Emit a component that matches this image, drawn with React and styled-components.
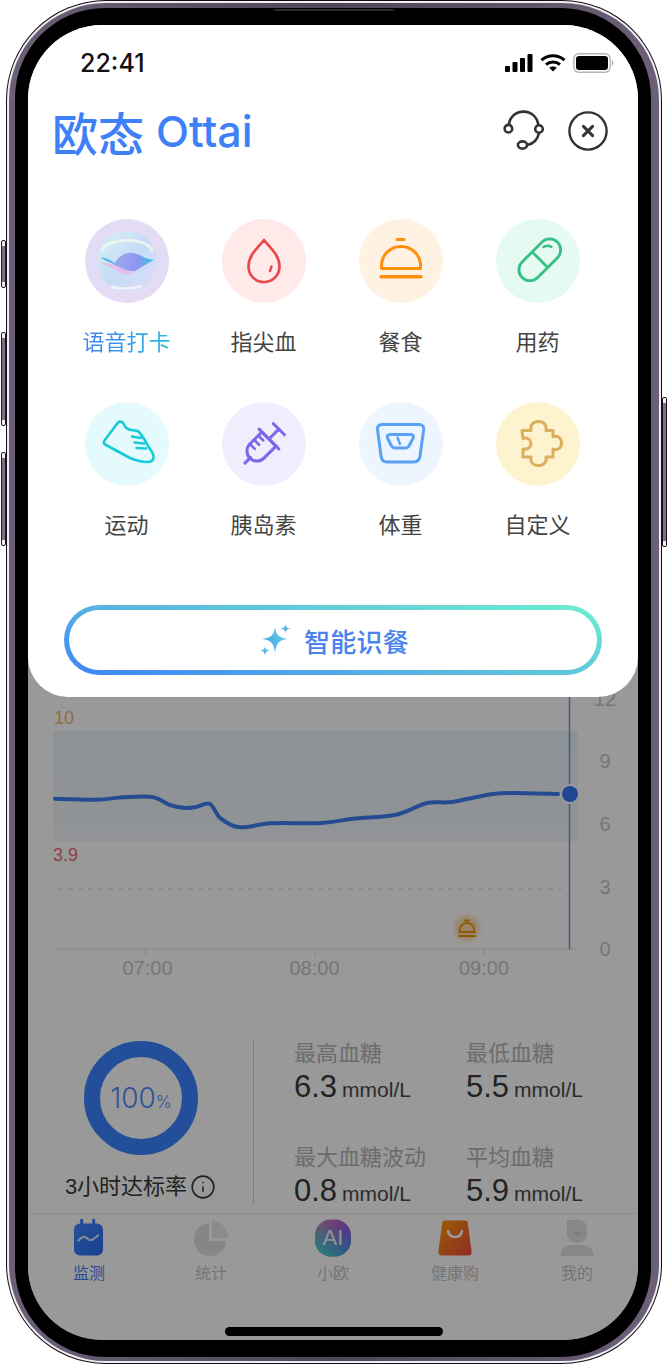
import React from 'react';
import styled, { createGlobalStyle } from 'styled-components';
import { Info } from 'lucide-react';

const SANS = '"Liberation Sans", "Noto Sans CJK SC", sans-serif';
const CJK = '"Noto Sans CJK SC", "Noto Sans", sans-serif';

const Global = createGlobalStyle`
  html, body { margin: 0; padding: 0; background: #fff; overflow: hidden; }
  body { font-family: ${CJK}; }
  * { box-sizing: border-box; }
`;

const Page = styled.div`
  width: 668px;
  height: 1366px;
  padding-left: 6px;
`;
const Phone = styled.div`
  position: relative;
  width: 656px;
  padding: 1px;
  background: #111;
  border-radius: 100px;
`;
const Rim = styled.div`
  padding: 2px;
  background: #f1edf3;
  border-radius: 99px;
`;
const Band = styled.div`
  padding: 5px 8px 4px 6px;
  background: linear-gradient(90deg, #6b6078, #4f4659 50%, #6b6078);
  border-radius: 97px;
`;
const Bezel = styled.div`
  position: relative;
  padding: 17px 13px;
  background: #000;
  border-radius: 90px;
`;
const Speaker = styled.div`
  position: absolute;
  top: 1px;
  left: 259px;
  width: 120px;
  height: 2px;
  background: #2c2a2e;
  border-radius: 0 0 3px 3px;
`;
const SideKey = styled.div`
  position: absolute;
  width: 5px;
  top: ${p => p.$top}px;
  height: ${p => p.$h}px;
  ${p => (p.$right ? 'right: -5px;' : 'left: -5px;')}
  background: linear-gradient(180deg, #f0edf2 0 5px, #7a6f88 5px calc(100% - 5px), #f0edf2 calc(100% - 5px));
  border: 1px solid #1c1a20;
  border-radius: 2px;
`;
const Screen = styled.div`
  position: relative;
  width: 610px;
  height: 1315px;
  background: #fff;
  border-radius: 74px;
  overflow: hidden;
`;
const Under = styled.div`
  display: flex;
  flex-direction: column;
  height: 100%;
  padding-top: 660px;
`;
const Chart = styled.svg`
  display: block;
  width: 610px;
  height: 300px;
  flex: none;
`;
const AxisText = styled.text`
  font-family: ${SANS};
  font-size: 20px;
  fill: #c6c6c6;
`;
const Stats = styled.section`
  display: flex;
  height: 166px;
  margin-top: 53px;
  flex: none;
`;
const RateBlock = styled.div`
  width: 236px;
  display: flex;
  flex-direction: column;
  align-items: center;
  padding-top: 3px;
`;
const Ring = styled.svg`
  display: block;
  width: 114px;
  height: 114px;
`;
const RingValue = styled.text`
  font-family: "Inter", sans-serif;
  font-size: 28px;
  font-weight: 300;
  fill: #4d8bff;
  text-anchor: middle;
`;
const RateLabel = styled.div`
  display: flex;
  align-items: center;
  gap: 3px;
  height: 28px;
  margin-top: 18px;
  font-family: ${SANS};
  font-size: 22px;
  line-height: 28px;
  color: #3a3a3a;
  svg { color: #3a3a3a; }
`;
const Divider = styled.div`
  width: 1px;
  height: 164px;
  margin-top: 2px;
  background: #d4d4d4;
  flex: none;
`;
const StatGrid = styled.div`
  display: grid;
  grid-template-columns: 172px 172px;
  grid-auto-rows: 104px;
  padding-left: 40px;
`;
const Stat = styled.div`
  display: flex;
  flex-direction: column;
`;
const StatLabel = styled.div`
  font-size: 22px;
  line-height: 26px;
  color: #b4b4b4;
  white-space: nowrap;
`;
const StatValue = styled.div`
  display: flex;
  align-items: baseline;
  gap: 5px;
  margin-top: 5px;
  font-family: ${SANS};
  font-size: 31px;
  line-height: 36px;
  color: #3a3a3a;
`;
const Unit = styled.span`
  font-size: 21px;
  color: #4a4a4a;
`;
const TabBar = styled.nav`
  display: grid;
  grid-template-columns: repeat(5, 122px);
  margin-top: 9px;
  border-top: 1px solid #ececec;
  padding-top: 5px;
  flex: none;
`;
const Tab = styled.div`
  display: flex;
  flex-direction: column;
  align-items: center;
  gap: 3px;
`;
const TabLabel = styled.span`
  font-size: 16px;
  line-height: 24px;
  color: ${p => (p.$active ? '#3f80f6' : '#c4c4c4')};
`;
const Dim = styled.div`
  position: absolute;
  inset: 0;
  background: rgba(0, 0, 0, 0.4);
`;
const Sheet = styled.div`
  position: absolute;
  top: 0;
  left: 0;
  right: 0;
  height: 672px;
  background: #fff;
  border-radius: 0 0 40px 40px;
  display: flex;
  flex-direction: column;
`;
const HomeBar = styled.div`
  position: absolute;
  left: 197px;
  bottom: 4px;
  width: 218px;
  height: 9px;
  background: #000;
  border-radius: 5px;
`;
const StatusBar = styled.div`
  display: flex;
  align-items: center;
  justify-content: space-between;
  height: 76px;
  padding: 0 23px 0 52px;
`;
const Clock = styled.span`
  font-family: "Inter", sans-serif;
  font-size: 25px;
  font-weight: 500;
  color: #111;
`;
const StatusIcons = styled.div`
  display: flex;
  align-items: center;
  gap: 7px;
`;
const Header = styled.header`
  display: flex;
  align-items: center;
  justify-content: space-between;
  height: 60px;
  padding: 0 30px 0 24px;
`;
const Logo = styled.div`
  display: flex;
  align-items: center;
  gap: 12px;
  color: #3e80f8;
  white-space: nowrap;
`;
const LogoCn = styled.span`
  font-family: ${CJK};
  font-size: 46px;
  font-weight: 500;
  line-height: 60px;
`;
const LogoEn = styled.span`
  font-family: "Inter", sans-serif;
  font-size: 43px;
  font-weight: 500;
  line-height: 60px;
`;
const HeaderActions = styled.div`
  display: flex;
  align-items: center;
  gap: 23px;
`;
const Actions = styled.div`
  display: grid;
  grid-template-columns: repeat(4, 137px);
  grid-auto-rows: 183px;
  padding: 58px 0 0 30px;
`;
const Action = styled.div`
  display: flex;
  flex-direction: column;
  align-items: center;
`;
const Badge = styled.div`
  width: 84px;
  height: 84px;
  border-radius: 50%;
  background: ${p => p.$bg};
  svg { display: block; }
`;
const ActionLabel = styled.span`
  margin-top: 21px;
  font-size: 22px;
  line-height: 32px;
  color: #444;
  white-space: nowrap;
`;
const VoiceLabel = styled(ActionLabel)`
  background: linear-gradient(90deg, #3f80f6, #29b9e0);
  -webkit-background-clip: text;
  background-clip: text;
  color: transparent;
`;
const AiButton = styled.div`
  width: 538px;
  height: 70px;
  margin: 20px 0 0 36px;
  padding: 5px;
  border-radius: 35px;
  background: linear-gradient(12deg, #3d84f8 0%, #5ab8e0 45%, #6eefcf 100%);
`;
const AiInner = styled.div`
  display: flex;
  align-items: center;
  justify-content: center;
  gap: 12px;
  height: 100%;
  border-radius: 30px;
  background: #fff;
  font-size: 26px;
  font-weight: 500;
  letter-spacing: 0.2px;
  color: #4a82ee;
  padding-left: 3px;
`;

/* ---------- drawings ---------- */
const Signal = () => (
  <svg width="28" height="18" viewBox="0 0 28 18" fill="#000">
    <rect x="0" y="12" width="5" height="6" rx="1" />
    <rect x="7.5" y="8" width="5" height="10" rx="1" />
    <rect x="15" y="4" width="5" height="14" rx="1" />
    <rect x="22.5" y="0" width="5" height="18" rx="1" />
  </svg>
);
const Wifi = () => (
  <svg width="26" height="18" viewBox="0 0 26 18" fill="none" stroke="#000" strokeWidth="3">
    <path d="M1.5 6.2 C8 0.2 18 0.2 24.5 6.2" />
    <path d="M6 10.6 C10 7 16 7 20 10.6" />
    <path d="M13 17.5 L9.2 13.7 C11.4 12 14.6 12 16.8 13.7 Z" fill="#000" stroke="none" />
  </svg>
);
const Battery = () => (
  <svg width="42" height="20" viewBox="0 0 42 20">
    <rect x="0.8" y="0.8" width="36.4" height="18.4" rx="5" fill="none" stroke="#b5b5b5" strokeWidth="1.4" />
    <rect x="3" y="3" width="32" height="14" rx="3.2" fill="#000" />
    <path d="M38.8 7 C41 7.6 41 12.4 38.8 13 Z" fill="#b5b5b5" />
  </svg>
);
const Headset = () => (
  <svg width="42" height="42" viewBox="0 0 42 42" fill="none" stroke="#333" strokeWidth="2.6" strokeLinecap="round">
    <circle cx="5.4" cy="18.7" r="3.8" />
    <circle cx="36" cy="19" r="3.8" />
    <ellipse cx="19.5" cy="35" rx="4.6" ry="3.6" />
    <path d="M5.8 14.8 C7 6.5 13 1.6 20.5 1.6 C28 1.6 34 6.5 35.4 15" />
    <path d="M36 23 C34.6 29.5 30.5 33.8 24.3 35" />
  </svg>
);
const CloseIcon = () => (
  <svg width="40" height="40" viewBox="0 0 40 40" fill="none" stroke="#333">
    <circle cx="20" cy="20" r="18.6" strokeWidth="2.4" />
    <path d="M15.4 15.4 L24.6 24.6 M24.6 15.4 L15.4 24.6" strokeWidth="3" strokeLinecap="round" />
  </svg>
);
const Icon84 = ({ children, ...rest }) => (
  <svg width="84" height="84" viewBox="0 0 84 84" fill="none" strokeLinecap="round" strokeLinejoin="round" {...rest}>
    {children}
  </svg>
);
const VoiceIcon = () => (
  <Icon84>
    <defs>
      <linearGradient id="orb" x1="0.1" y1="0.1" x2="0.9" y2="0.9">
        <stop offset="0" stopColor="#d4eef2" />
        <stop offset="0.5" stopColor="#c5dcf6" />
        <stop offset="1" stopColor="#d9dcf8" />
      </linearGradient>
      <linearGradient id="wave" x1="0" y1="0" x2="1" y2="0">
        <stop offset="0" stopColor="#26c3ee" />
        <stop offset="0.35" stopColor="#9aa4ee" />
        <stop offset="0.7" stopColor="#8f96ee" />
        <stop offset="1" stopColor="#2cc6ea" />
      </linearGradient>
      <linearGradient id="rosy" x1="0" y1="0" x2="1" y2="0">
        <stop offset="0" stopColor="#f7b4e6" />
        <stop offset="1" stopColor="#d9c2f5" />
      </linearGradient>
    </defs>
    <circle cx="42" cy="42" r="30" fill="url(#orb)" />
    <path d="M17 31 C22 19 62 17 67 32" stroke="#f2f7ea" strokeWidth="3" opacity="0.85" />
    <path d="M27 68 C36 70 48 70 56 67" stroke="#eef4fa" strokeWidth="2.5" />
    <path d="M15 44 C22 46 30 50 38 55 C44 57 50 54 52 50 C40 50 28 44 15 44 Z" fill="url(#rosy)" />
    <path d="M16 39 C22 38 25 42 30 44 C34 36 42 33 48 34 C55 35 60 40 69 41 C62 44 57 48 50 52 C42 53 30 46 16 39 Z" fill="url(#wave)" />
  </Icon84>
);
const DropIcon = () => (
  <Icon84 stroke="#e8494b" strokeWidth="2.7">
    <path d="M42 21 C48 28.5 57.5 36 57.5 47.5 C57.5 56.5 50.5 63 42 63 C33.5 63 26.5 56.5 26.5 47.5 C26.5 36 36 28.5 42 21 Z" />
    <path d="M49.5 47.5 L48 52" strokeWidth="2.4" />
  </Icon84>
);
const MealIcon = () => (
  <Icon84 stroke="#ff900c" strokeWidth="3">
    <path d="M38 20.5 H45" />
    <path d="M22.5 49.5 V47 C22.5 36 31 27.5 42 27.5 C53 27.5 61.5 36 61.5 47 V49.5 Z" />
    <path d="M22 57.8 H62" strokeWidth="3.4" />
  </Icon84>
);
const PillIcon = () => (
  <Icon84 stroke="#36bf85" strokeWidth="2.8">
    <g transform="rotate(-45 43.8 40.8)">
      <rect x="18.8" y="29.8" width="50" height="22" rx="11" />
      <path d="M44 29.8 V51.8" />
    </g>
    <path d="M47.5 28 C50 26.5 53 26.5 55.5 28" strokeWidth="2.4" />
  </Icon84>
);
const ShoeIcon = () => (
  <Icon84 stroke="#17cbd8" strokeWidth="2.6">
    <path d="M19.5 38.5 L33 20.5 C34.5 18.8 37.5 19.8 38.5 21.5 C40 25.5 42.5 27.5 46 28 L53 29 C56 32 60 38 63 44 C65 47.5 68.5 50 68.5 55 C68.5 59 66 60 62 60 C55 60 50 58 45 56 L21 43 C19 42 18 40.5 19.5 38.5 Z" />
    <path d="M22 45.5 C30 50 38 54 46 58" strokeWidth="2" opacity="0" />
    <path d="M47 34.5 L56 36 M49.5 40.5 L59 41.5 M51.5 46 L61 46.5" />
    <path d="M25 45 L45 56" strokeWidth="1.4" opacity="0.5" />
  </Icon84>
);
const SyringeIcon = () => (
  <Icon84 stroke="#7a69ea" strokeWidth="3">
    <g transform="rotate(-45 42 42)">
      <path d="M15 42 H23" />
      <path d="M49 32 H32 C26 32 22 37 22 42 C22 47 26 52 32 52 H49 Z" />
      <path d="M49 28 V56" />
      <path d="M49 42 H63" />
      <path d="M63 34 V50" />
      <path d="M32 32 V39 M38 32 V39 M44 32 V39" strokeWidth="2.6" />
    </g>
  </Icon84>
);
const ScaleIcon = () => (
  <Icon84 stroke="#5aa2f8" strokeWidth="3">
    <path d="M23 22.5 H60 C63 22.5 65 24.5 64.7 27.5 L61 54 C60.5 58 58 60 54.5 60 H28 C25 60 22.5 58 22 54 L18.5 27.5 C18 24.5 20 22.5 23 22.5 Z" />
    <path d="M31 32.5 H52 C54 32.5 55 34 54.2 36 L50 44 C49 45.5 48 46 46.5 46 H36 C34.5 46 33.5 45.5 32.5 44 L28.5 36 C27.5 34 29 32.5 31 32.5 Z" />
    <path d="M38.5 35.5 L41 42" strokeWidth="2.4" />
  </Icon84>
);
const PuzzleIcon = () => (
  <Icon84 stroke="#dcae5e" strokeWidth="3">
    <path d="M26 28.5 H35 C34 23 37 19.5 42.5 19.5 C48 19.5 51 23 50 28.5 H57 V35 C61.5 33 65.5 36 65.5 41 C65.5 46 61.5 49 57 47 V55 H50 C51 60 48 63.5 42.5 63.5 C37 63.5 34 60 35 55 H27 V47 C31.5 48 35 45 35 41.5 C35 38 31.5 35 27 36.5 Z" />
  </Icon84>
);
const Sparkle = () => (
  <svg width="32" height="32" viewBox="0 0 32 32">
    <defs>
      <linearGradient id="spark" x1="0" y1="1" x2="1" y2="0">
        <stop offset="0" stopColor="#4a8ef6" />
        <stop offset="1" stopColor="#62e2d6" />
      </linearGradient>
    </defs>
    <path fill="url(#spark)" d="M14 3 C15 11 18 14 27 15 C18 16 15 19 14 29 C13 19 10 16 1 15 C10 14 13 11 14 3 Z" transform="translate(1 0)" />
    <path fill="url(#spark)" d="M25.5 0 C26 3 27 4 30.5 4.5 C27 5 26 6 25.5 9.5 C25 6 24 5 20.5 4.5 C24 4 25 3 25.5 0 Z" />
    <path fill="url(#spark)" d="M5 22 C5.4 25 6.4 26 10 26.5 C6.4 27 5.4 28 5 32 C4.6 28 3.6 27 0 26.5 C3.6 26 4.6 25 5 22 Z" />
  </svg>
);

const curve = [
  [55, 798.7], [96, 799.7], [123, 797.3], [152.5, 797], [170, 805], [185.6, 808], [197, 806.7],
  [210, 804], [220.6, 818.3], [240, 827.3], [271, 823.3], [322, 823], [353, 818.7], [396, 814.7],
  [427, 803], [452, 802], [493, 794], [525, 793.2], [558, 794],
];
const smooth = pts => {
  let d = `M${pts[0][0]} ${pts[0][1]}`;
  for (let i = 0; i < pts.length - 1; i++) {
    const a = pts[Math.max(0, i - 1)], b = pts[i], c = pts[i + 1], e = pts[Math.min(pts.length - 1, i + 2)];
    const c1 = [b[0] + (c[0] - a[0]) / 6, b[1] + (c[1] - a[1]) / 6];
    const c2 = [c[0] - (e[0] - b[0]) / 6, c[1] - (e[1] - b[1]) / 6];
    d += ` C${c1[0].toFixed(1)} ${c1[1].toFixed(1)} ${c2[0].toFixed(1)} ${c2[1].toFixed(1)} ${c[0]} ${c[1]}`;
  }
  return d;
};

const GlucoseChart = () => (
  <Chart viewBox="28 685 610 300">
    <defs>
      <linearGradient id="band" x1="0" y1="0" x2="0" y2="1">
        <stop offset="0" stopColor="#e9f3fb" />
        <stop offset="1" stopColor="#f3f6fa" />
      </linearGradient>
      <radialGradient id="glow">
        <stop offset="0.5" stopColor="#ffdca8" />
        <stop offset="1" stopColor="#ffdca8" stopOpacity="0" />
      </radialGradient>
    </defs>
    <rect x="53" y="731" width="525" height="110.5" fill="url(#band)" />
    <path d="M58 889 H562" stroke="#dcdcdc" strokeWidth="1" strokeDasharray="5 5" />
    <path d="M53 949 H580" stroke="#e6e6e6" strokeWidth="1" />
    <path d="M145.5 949 V956 M315 949 V956 M484.5 949 V956" stroke="#e0e0e0" strokeWidth="1" />
    <path d="M569.5 690 V949" stroke="#5f92ef" strokeWidth="1.4" />
    <path d={smooth(curve)} fill="none" stroke="#3e7ef0" strokeWidth="4" strokeLinecap="round" />
    <circle cx="570" cy="794" r="10" fill="#fff" />
    <circle cx="570" cy="794" r="8" fill="#3577f2" />
    <circle cx="467" cy="928" r="16" fill="url(#glow)" />
    <g fill="none" stroke="#ee8f0a" strokeWidth="1.8" strokeLinecap="round">
      <path d="M465 920.5 H469" />
      <path d="M459.5 932 C459.5 926.5 462.5 923 467 923 C471.5 923 474.5 926.5 474.5 932 Z" />
      <path d="M459 936 H475" strokeWidth="2" />
    </g>
    <AxisText x="54" y="724" style={{ fill: '#e9b86a', fontSize: 18 }}>10</AxisText>
    <AxisText x="53" y="861" style={{ fill: '#ef6a74', fontSize: 18 }}>3.9</AxisText>
    {[['12', 706], ['9', 768], ['6', 831], ['3', 894], ['0', 956]].map(([t, y]) => (
      <AxisText key={t} x="605" y={y} textAnchor="middle">{t}</AxisText>
    ))}
    {[['07:00', 147.5], ['08:00', 314.5], ['09:00', 484]].map(([t, x]) => (
      <AxisText key={t} x={x} y="975" textAnchor="middle">{t}</AxisText>
    ))}
  </Chart>
);

const MonitorTab = () => (
  <svg width="40" height="38" viewBox="0 0 40 38">
    <defs>
      <linearGradient id="mon" x1="0" y1="0" x2="1" y2="1">
        <stop offset="0" stopColor="#3f88ff" />
        <stop offset="1" stopColor="#2b6cf0" />
      </linearGradient>
    </defs>
    <path d="M12.7 1 V6 M24.7 1 V6" stroke="#3480ff" strokeWidth="3" strokeLinecap="round" />
    <rect x="5" y="4.5" width="29" height="32" rx="6" fill="url(#mon)" />
    <path d="M9.5 21.5 C13 17 16 17 19 20 C22 22.5 25 20 29 16.5" stroke="#d6e2fa" strokeWidth="2.2" fill="none" strokeLinecap="round" />
  </svg>
);
const PieTab = () => (
  <svg width="40" height="38" viewBox="0 0 40 38" fill="#e0e0e0">
    <path d="M18 4 V22 H35 C35 31 27 37 19 37 C10 37 3 29.5 3 20.5 C3 11.5 9.5 4.5 18 4 Z" />
    <path d="M21 1 C29 1.5 36.5 8.5 37 19 H21 Z" fill="#e8e8e8" />
  </svg>
);
const AiTab = () => (
  <svg width="40" height="38" viewBox="0 0 40 38">
    <defs>
      <linearGradient id="aiA" x1="0" y1="0" x2="1" y2="1">
        <stop offset="0" stopColor="#ff5f9e" />
        <stop offset="0.45" stopColor="#a064d8" />
        <stop offset="1" stopColor="#3f6ff0" />
      </linearGradient>
      <linearGradient id="aiB" x1="0" y1="1" x2="0.7" y2="0.2">
        <stop offset="0" stopColor="#39e0c8" />
        <stop offset="0.6" stopColor="#39e0c8" stopOpacity="0.4" />
        <stop offset="1" stopColor="#39e0c8" stopOpacity="0" />
      </linearGradient>
    </defs>
    <rect x="2" y="0.5" width="36" height="37" rx="16" fill="url(#aiA)" />
    <rect x="2" y="0.5" width="36" height="37" rx="16" fill="url(#aiB)" />
    <text x="20" y="26" textAnchor="middle" fontFamily={SANS} fontSize="22" fill="#f4f4f4">AI</text>
  </svg>
);
const BagTab = () => (
  <svg width="40" height="38" viewBox="0 0 40 38">
    <defs>
      <linearGradient id="bag" x1="0" y1="0" x2="1" y2="1">
        <stop offset="0" stopColor="#ff9a0a" />
        <stop offset="1" stopColor="#f04a3c" />
      </linearGradient>
    </defs>
    <path d="M9.5 1.5 H30.5 C32 1.5 32.5 2.5 32.8 4 L36.5 32 C37 35 35.5 36.5 33 36.5 H7 C4.5 36.5 3 35 3.5 32 L7.2 4 C7.5 2.5 8 1.5 9.5 1.5 Z" fill="url(#bag)" />
    <path d="M13 12 C14.5 20 25.5 20 27 12" stroke="#fff" strokeWidth="2.6" fill="none" strokeLinecap="round" />
  </svg>
);
const PersonTab = () => (
  <svg width="40" height="38" viewBox="0 0 40 38" fill="#e2e2e2">
    <path d="M10 1 H22 C27 1 30 4.5 30 10 V15 C30 20 26 24 20 24 C14 24 10 20 10 15 Z" />
    <path d="M16.5 13.5 C18 17 23 17 24.5 13.5 Z" fill="#c9c9c9" />
    <path d="M3.5 37 C3 31 8 26.5 14 26 H26 C32 26.5 37 31 36.5 37 Z" />
  </svg>
);

const actions = [
  { label: '语音打卡', bg: '#e3dcf4', icon: VoiceIcon, voice: true },
  { label: '指尖血', bg: '#ffe9e9', icon: DropIcon },
  { label: '餐食', bg: '#fff2e3', icon: MealIcon },
  { label: '用药', bg: '#e5faf3', icon: PillIcon },
  { label: '运动', bg: '#e5fafd', icon: ShoeIcon },
  { label: '胰岛素', bg: '#f0eefd', icon: SyringeIcon },
  { label: '体重', bg: '#edf5ff', icon: ScaleIcon },
  { label: '自定义', bg: '#fef3cf', icon: PuzzleIcon },
];
const stats = [
  ['最高血糖', '6.3'],
  ['最低血糖', '5.5'],
  ['最大血糖波动', '0.8'],
  ['平均血糖', '5.9'],
];
const tabs = [
  ['监测', MonitorTab, true],
  ['统计', PieTab],
  ['小欧', AiTab],
  ['健康购', BagTab],
  ['我的', PersonTab],
];

export default function App() {
  return (
    <Page>
      <Global />
      <Phone>
        <SideKey $top={240} $h={48} />
        <SideKey $top={332} $h={94} />
        <SideKey $top={452} $h={94} />
        <SideKey $right $top={397} $h={150} />
        <Rim>
          <Band>
            <Bezel>
              <Speaker />
              <Screen>
                <Under>
                  <GlucoseChart />
                  <Stats>
                    <RateBlock>
                      <Ring viewBox="0 0 114 114">
                        <circle cx="57" cy="57" r="49" fill="none" stroke="#3b82ff" strokeWidth="16" />
                        <RingValue x="57" y="67">
                          100<tspan fontSize="17">%</tspan>
                        </RingValue>
                      </Ring>
                      <RateLabel>
                        3小时达标率
                        <Info size={26} strokeWidth={1.5} />
                      </RateLabel>
                    </RateBlock>
                    <Divider />
                    <StatGrid>
                      {stats.map(([label, value]) => (
                        <Stat key={label}>
                          <StatLabel>{label}</StatLabel>
                          <StatValue>
                            {value}
                            <Unit>mmol/L</Unit>
                          </StatValue>
                        </Stat>
                      ))}
                    </StatGrid>
                  </Stats>
                  <TabBar>
                    {tabs.map(([label, TabIcon, active]) => (
                      <Tab key={label}>
                        <TabIcon />
                        <TabLabel $active={active}>{label}</TabLabel>
                      </Tab>
                    ))}
                  </TabBar>
                </Under>
                <Dim />
                <HomeBar />
                <Sheet>
                  <StatusBar>
                    <Clock>22:41</Clock>
                    <StatusIcons>
                      <Signal />
                      <Wifi />
                      <Battery />
                    </StatusIcons>
                  </StatusBar>
                  <Header>
                    <Logo>
                      <LogoCn>欧态</LogoCn>
                      <LogoEn>Ottai</LogoEn>
                    </Logo>
                    <HeaderActions>
                      <Headset />
                      <CloseIcon />
                    </HeaderActions>
                  </Header>
                  <Actions>
                    {actions.map(({ label, bg, icon: Icon, voice }) => {
                      const Label = voice ? VoiceLabel : ActionLabel;
                      return (
                        <Action key={label}>
                          <Badge $bg={bg}>
                            <Icon />
                          </Badge>
                          <Label>{label}</Label>
                        </Action>
                      );
                    })}
                  </Actions>
                  <AiButton>
                    <AiInner>
                      <Sparkle />
                      智能识餐
                    </AiInner>
                  </AiButton>
                </Sheet>
              </Screen>
            </Bezel>
          </Band>
        </Rim>
      </Phone>
    </Page>
  );
}
